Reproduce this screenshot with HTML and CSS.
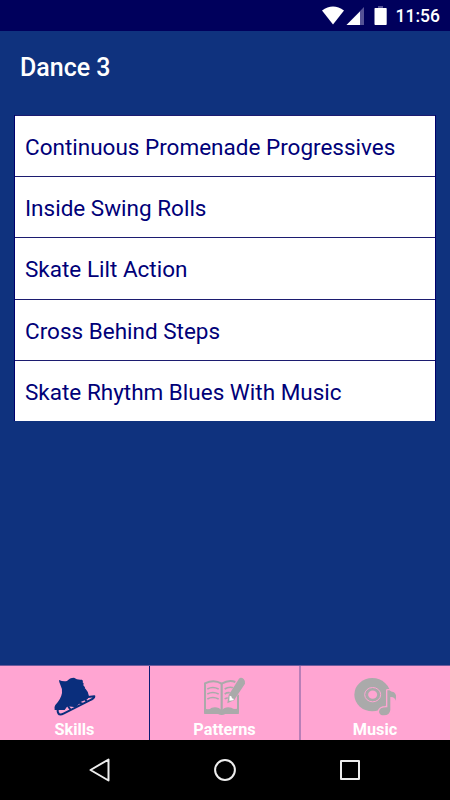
FILE: index.html
```html
<!DOCTYPE html>
<html lang="en">
<head>
<meta charset="utf-8">
<title>Dance 3</title>
<link rel="stylesheet" href="styles.css">
</head>
<body>
<div class="screen">
  <div class="status">
    <svg class="status-icons" width="66" height="31" viewBox="0 0 66 31">
      <path fill="#fff" d="M0 10.5Q11 2.5 22 10.5L11 24.500Z"/>
      <path fill="#555296" d="M42 7V25H24.500Z"/>
      <path fill="#fff" d="M38 11.500V25H24.500Z"/>
      <path fill="#555296" d="M56 6h5v2h-5z"/>
      <rect x="52.500" y="8" width="12.200" height="17" rx=".7" fill="#fff"/>
    </svg>
    <span class="clock">11:56</span>
  </div>
  <header class="title">Dance 3</header>
  <main class="content">
    <ul class="list">
      <li>Continuous Promenade Progressives</li>
      <li>Inside Swing Rolls</li>
      <li>Skate Lilt Action</li>
      <li>Cross Behind Steps</li>
      <li>Skate Rhythm Blues With Music</li>
    </ul>
  </main>
  <nav class="tabs">
    <div class="tab">
      <svg viewBox="0 0 150 132">
        <path fill="#0a2e7c" d="M27 18Q40 24 51 21Q59 11 72 11Q82 19 96 17Q101 20 98 25Q103 28 100 34L105 40Q103 43 107 45Q116 54 117 67L113 75L92 84L78 100L52 97L44 108H14Q12 98 16 93Q33 75 36 57Q38 45 31 32Q27 25 27 18Z"/>
        <path fill="none" stroke="#0a2e7c" stroke-width="6" stroke-linecap="round" stroke-linejoin="round" d="M23 106Q22 117 28 121Q34 122 42 118L119 79Q133 74 133 67L114 69M54 96L62 108M84 85L98 89M104 74L110 82"/>
      </svg>
      <span>Skills</span>
    </div>
    <div class="tab">
      <svg viewBox="0 0 150 132">
        <g fill="none" stroke="#aaa">
          <path stroke-width="6" d="M15 116V28Q42 15 65 29Q87 16 106 24M114 62V116"/>
          <path stroke-width="6.500" d="M65 28V116"/>
          <path stroke-width="4.800" d="M22 45Q38 36 56 45M22 60Q38 51 56 60M22 75Q38 66 56 75M74 45Q86 37 100 41M74 60Q83 54 93 57M74 75Q79 71 86 72"/>
        </g>
        <path fill="#aaa" d="M12.500 101Q24 110 35 101Q54 96 65 109Q76 96 94 101Q105 109 116.500 101V120H76Q65 126 54 120H12.500Z"/>
        <path fill="#aaa" stroke="#ffa5d2" stroke-width="2" paint-order="stroke" d="M117 14Q123 8 131 15Q138 23 135 29L107 71L103 78L82 88L86 63Z"/>
        <path fill="#fff" d="M89 65L94 67L96 73L102 75L99 79L88 80Z"/>
      </svg>
      <span>Patterns</span>
    </div>
    <div class="tab">
      <svg viewBox="0 0 150 132">
        <ellipse cx="67" cy="62" rx="54" ry="50" fill="#aaa"/>
        <ellipse cx="68" cy="62" rx="24" ry="21.500" fill="none" stroke="#ffa5d2" stroke-width="3"/>
        <ellipse cx="68" cy="62" rx="13.500" ry="12.500" fill="#ffa5d2"/>
        <path stroke="#ffa5d2" stroke-width="8" stroke-linejoin="round" paint-order="stroke" fill="#aaa" d="M112 49H118Q123 54 132 55Q142 62 136 80Q135 68 121 69V108Q119 124 102 124Q88 124 87 113Q88 99 112 100Z"/>
      </svg>
      <span>Music</span>
    </div>
  </nav>
  <div class="navigation">
    <svg viewBox="0 0 30 30"><path d="M5.500 15L23.500 4.500V25.500Z"/></svg>
    <svg viewBox="0 0 30 30"><circle cx="15" cy="15" r="9.900"/></svg>
    <svg viewBox="0 0 30 30"><rect x="6" y="6" width="18" height="18"/></svg>
  </div>
</div>
</body>
</html>
```

FILE: styles.css
```css
* { box-sizing: border-box; }
body { margin: 0; font-family: Roboto, sans-serif; }
.screen {
  width: 450px;
  height: 800px;
  display: flex;
  flex-direction: column;
  background: #0f327e;
  overflow: hidden;
}
.status {
  height: 31px;
  display: flex;
  justify-content: flex-end;
  align-items: center;
  gap: 8px;
  padding-right: 10px;
  background: #00005c;
  color: #fff;
}
.status-icons { display: block; }
.clock { font-size: 17.5px; font-weight: 500; line-height: 21px; padding-top: 1px; }
.title {
  height: 70px;
  padding: 0 20px;
  font-size: 25px;
  font-weight: 500;
  line-height: 74px;
  color: #fff;
}
.content { flex: 1; padding: 14px 15px 0; }
.list {
  margin: 0;
  padding: 0;
  list-style: none;
  background: #fff;
  box-shadow: -1px 0 #00006c, 1px 0 #00006c;
}
.list li {
  height: 61.2px;
  padding-left: 10px;
  border-top: 1px solid #1c1c70;
  font-size: 22.5px;
  line-height: 62px;
  color: #000078;
  white-space: nowrap;
}
.tabs {
  height: 75px;
  display: grid;
  grid-template-columns: 149px 150px 151px;
  background: #ffa5d2;
  border-top: 1px solid #6e5a9c;
}
.tab {
  display: flex;
  flex-direction: column;
  align-items: center;
  gap: 2px;
  padding-top: 8px;
  color: #fff;
  font-size: 16.25px;
  font-weight: 700;
  line-height: 19px;
}
.tab:nth-child(2) { border-left: 1px solid #0c1c74; }
.tab:nth-child(3) { border-left: 2px solid #b97fb8; padding-right: 1px; }
.tab svg { width: 50px; height: 44px; flex: none; }
.tab:nth-child(-n+2) svg { margin-left: 1px; }
.navigation {
  height: 60px;
  display: flex;
  justify-content: center;
  gap: 95px;
  align-items: center;
  background: #000;
}
.navigation svg {
  width: 30px;
  height: 30px;
  fill: none;
  stroke: #eee;
  stroke-width: 2;
  stroke-linejoin: round;
}
```
